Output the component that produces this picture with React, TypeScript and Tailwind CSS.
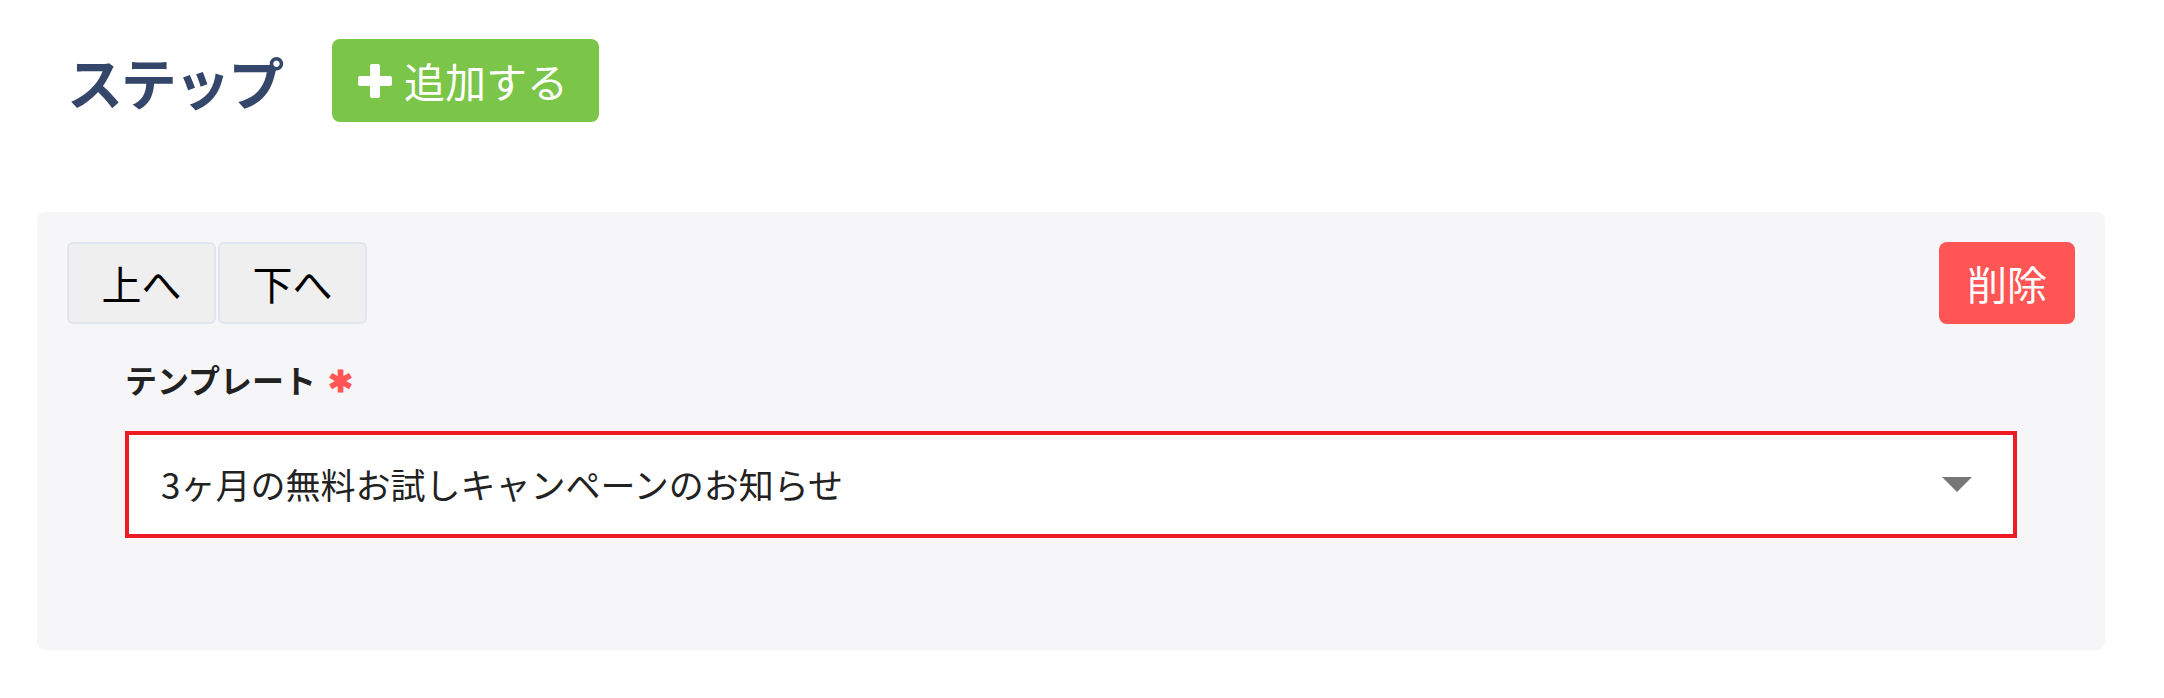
import React from 'react';

const font = "font-['Noto_Sans_CJK_JP','Noto_Sans',sans-serif]";

const PlusIcon = () => (
  <svg width="34" height="34" viewBox="0 0 34 34" className="shrink-0">
    <rect x="12" y="0" width="10" height="34" rx="2" fill="#fff" />
    <rect x="0" y="12" width="34" height="10" rx="2" fill="#fff" />
  </svg>
);

const MoveButton: React.FC<{ children: React.ReactNode }> = ({ children }) => (
  <button className="w-[149px] h-[82px] border-2 border-[#e1e5ee] bg-[#efefef] rounded-md text-[40px] text-black leading-none flex items-center justify-center">
    {children}
  </button>
);

export default function App() {
  const [value] = React.useState('3ヶ月の無料お試しキャンペーンのお知らせ');

  return (
    <div className={`${font} bg-white w-[2164px] h-[698px] pl-[37px] pr-[59px]`}>
      <div className="pt-[39px] pl-[30px] flex items-center">
        <h2 className="text-[56px] font-semibold text-[#34466a] tracking-[-0.04em] leading-none">ステップ</h2>
        <button className="ml-[50px] h-[83px] w-[267px] bg-[#7bc548] rounded-lg flex items-center pl-[26px] gap-[12px] text-white text-[41px] leading-none">
          <PlusIcon />
          <span>追加する</span>
        </button>
      </div>

      <div className="mt-[90px] bg-[#f6f6f8] rounded-lg p-[30px] pb-[112px]">
        <div className="flex justify-between items-start">
          <div className="flex gap-[2px]">
            <MoveButton>上へ</MoveButton>
            <MoveButton>下へ</MoveButton>
          </div>
          <button className="h-[82px] px-[28px] bg-[#ff5555] rounded-lg text-white text-[40px] leading-none">削除</button>
        </div>

        <div className="px-[58px]">
          <div className="mt-[30px] flex items-center gap-[12px] leading-[50px]">
            <span className="text-[32px] font-bold text-[#222]">テンプレート</span>
            <span className="text-[30px] font-bold text-[#ff5555]">✱</span>
          </div>
          <div className="mt-[27px] h-[107px] border-4 border-[#ed1c24] bg-white flex items-center justify-between pl-[32px] pr-[41px]">
            <span className="text-[35px] text-[#222]">{value}</span>
            <svg width="30" height="15" viewBox="0 0 30 15">
              <path d="M0 0 L30 0 L15 15 Z" fill="#777" />
            </svg>
          </div>
        </div>
      </div>
    </div>
  );
}
